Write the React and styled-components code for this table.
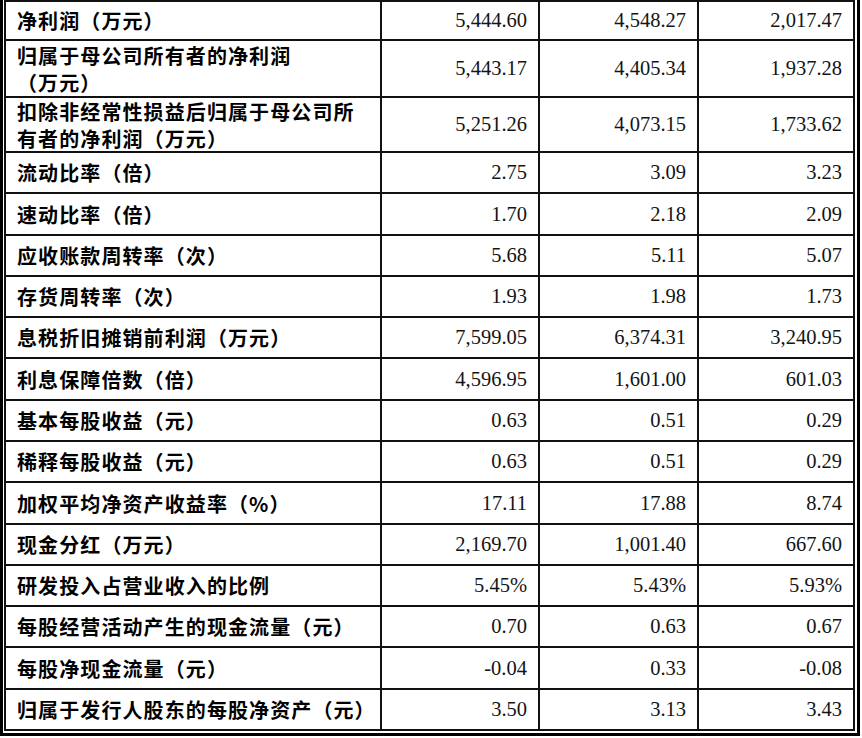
import React from "react";
import styled, { createGlobalStyle } from "styled-components";

const GlobalStyle = createGlobalStyle`
  html, body {
    margin: 0;
    padding: 0;
    background: #fff;
  }
`;

const Frame = styled.div`
  width: 851px;
  border-left: 3px solid #000;
  border-right: 3px solid #000;
  border-bottom: 3px solid #000;
  padding: 0 2px 2px 1px;
`;

const Grid = styled.div`
  display: grid;
  grid-template-columns: 376px 158px 159px 156px;
  border-top: 2px solid #111;
  border-left: 2px solid #111;
`;

const Row = styled.div`
  display: contents;
`;

const Cell = styled.div`
  box-sizing: border-box;
  height: ${(p) => p.$h}px;
  border-right: 2px solid #111;
  border-bottom: 2px solid #111;
  display: flex;
  align-items: center;
`;

const Label = styled(Cell)`
  padding: 0 4px 0 11px;
  font-family: "Noto Sans CJK SC", "Noto Sans CJK TC", sans-serif;
  font-weight: 700;
  font-size: 20px;
  letter-spacing: 1.1px;
  line-height: 27px;
  color: #000;
  white-space: nowrap;
`;

const Num = styled(Cell)`
  justify-content: flex-end;
  padding: 0 11px 0 6px;
  font-family: "Liberation Serif", "Times New Roman", serif;
  font-size: 20.5px;
  color: #141414;
`;

const rows = [
  { label: ["净利润（万元）"], v: ["5,444.60", "4,548.27", "2,017.47"], h: 39 },
  { label: ["归属于母公司所有者的净利润", "（万元）"], v: ["5,443.17", "4,405.34", "1,937.28"], h: 57 },
  { label: ["扣除非经常性损益后归属于母公司所", "有者的净利润（万元）"], v: ["5,251.26", "4,073.15", "1,733.62"], h: 55 },
  { label: ["流动比率（倍）"], v: ["2.75", "3.09", "3.23"], h: 41 },
  { label: ["速动比率（倍）"], v: ["1.70", "2.18", "2.09"], h: 42 },
  { label: ["应收账款周转率（次）"], v: ["5.68", "5.11", "5.07"], h: 41 },
  { label: ["存货周转率（次）"], v: ["1.93", "1.98", "1.73"], h: 41 },
  { label: ["息税折旧摊销前利润（万元）"], v: ["7,599.05", "6,374.31", "3,240.95"], h: 41 },
  { label: ["利息保障倍数（倍）"], v: ["4,596.95", "1,601.00", "601.03"], h: 42 },
  { label: ["基本每股收益（元）"], v: ["0.63", "0.51", "0.29"], h: 41 },
  { label: ["稀释每股收益（元）"], v: ["0.63", "0.51", "0.29"], h: 41 },
  { label: ["加权平均净资产收益率（%）"], v: ["17.11", "17.88", "8.74"], h: 42 },
  { label: ["现金分红（万元）"], v: ["2,169.70", "1,001.40", "667.60"], h: 41 },
  { label: ["研发投入占营业收入的比例"], v: ["5.45%", "5.43%", "5.93%"], h: 41 },
  { label: ["每股经营活动产生的现金流量（元）"], v: ["0.70", "0.63", "0.67"], h: 41 },
  { label: ["每股净现金流量（元）"], v: ["-0.04", "0.33", "-0.08"], h: 42 },
  { label: ["归属于发行人股东的每股净资产（元）"], v: ["3.50", "3.13", "3.43"], h: 41 },
];

const App = () => {
  return (
    <>
      <GlobalStyle />
      <Frame>
        <Grid>
          {rows.map((r, i) => (
            <Row key={i}>
              <Label $h={r.h}>
                <div>
                  {r.label.map((line, j) => (
                    <div key={j}>{line}</div>
                  ))}
                </div>
              </Label>
              {r.v.map((val, j) => (
                <Num key={j} $h={r.h}>
                  {val}
                </Num>
              ))}
            </Row>
          ))}
        </Grid>
      </Frame>
    </>
  );
};

export default App;
